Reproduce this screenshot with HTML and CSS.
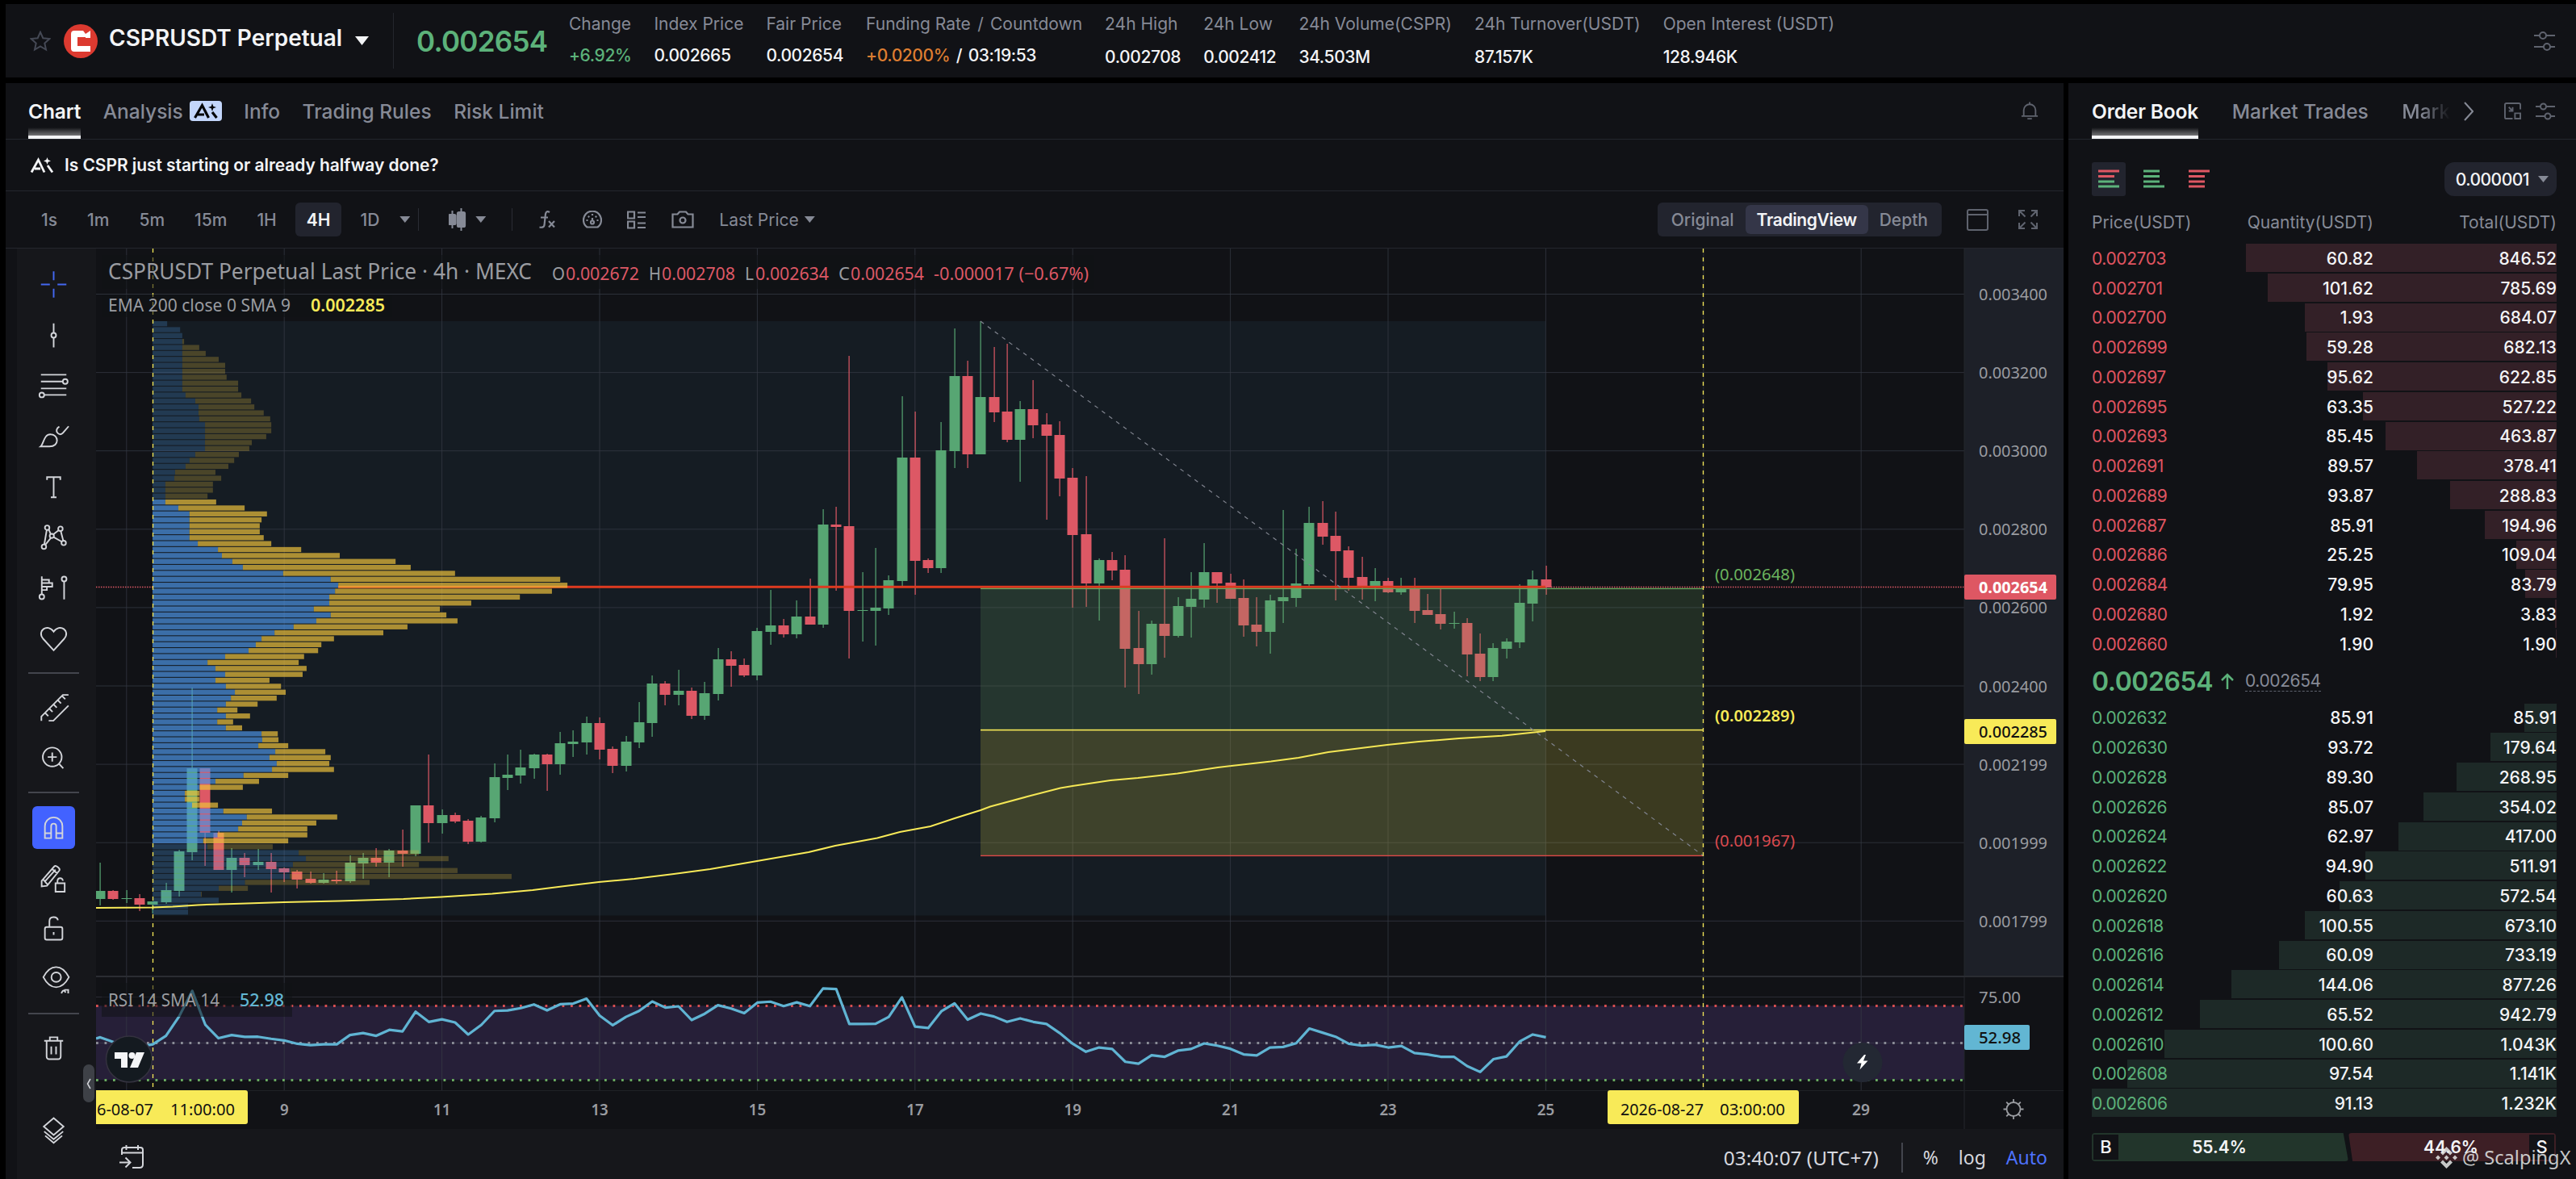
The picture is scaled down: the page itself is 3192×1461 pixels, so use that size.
FILE: index.html
```html
<!DOCTYPE html>
<html lang="en">
<head>
    <meta charset="UTF-8">
    <meta name="viewport" content="width=device-width, initial-scale=1.0">
    <title>CSPRUSDT Perpetual</title>
    <link rel="stylesheet" href="styles.css">
</head>
<body>
    <header class="ticker">
        <svg class="star" viewBox="0 0 26 26"><path d="M13 1.8l3.3 7.4 8 .9-6 5.4 1.7 8-7-4.1-7 4.1 1.7-8-6-5.4 8-.9z"/></svg>
        <svg class="coin" viewBox="0 0 42 42"><circle cx="21" cy="21" r="21" fill="#dc3a30"/><path d="M9 12q0-4 4-4h11l3 4 6-4v9h-6v-1H17v11h16v7H13q-4 0-4-4z" fill="#fff"/></svg>
        <h1 class="pair">CSPRUSDT Perpetual</h1>
        <i class="caret caret-lg"></i>
        <div class="last">0.002654</div>
        <dl class="stats">
            <div><dt>Change</dt><dd class="up">+6.92%</dd></div>
            <div><dt>Index Price</dt><dd>0.002665</dd></div>
            <div><dt>Fair Price</dt><dd>0.002654</dd></div>
            <div><dt>Funding Rate <span class="slash">/</span> Countdown</dt><dd><span class="orange">+0.0200%</span> <span class="slash">/</span> 03:19:53</dd></div>
            <div><dt>24h High</dt><dd>0.002708</dd></div>
            <div><dt>24h Low</dt><dd>0.002412</dd></div>
            <div><dt>24h Volume(CSPR)</dt><dd>34.503M</dd></div>
            <div><dt>24h Turnover(USDT)</dt><dd>87.157K</dd></div>
            <div><dt>Open Interest (USDT)</dt><dd>128.946K</dd></div>
        </dl>
        <svg class="line-icon sliders" viewBox="0 0 26 28"><path d="M0 7h7M15 7h11M0 21h12M20 21h6"/><circle cx="11" cy="7" r="4"/><circle cx="16" cy="21" r="4"/></svg>
    </header>

    <main>
        <section class="panel chart-panel">
            <nav class="tabs">
                <a class="on">Chart</a>
                <a>Analysis
                    <svg class="ai-badge" viewBox="0 0 40 25"><rect width="40" height="25" rx="4" fill="#c3d6fb"/><path d="M6.500 21L15.500 5.500 23.500 21M10 17h8M28 14l5.500 7" stroke="#050608" stroke-width="3.200" fill="none"/><path d="M28 3l1.300 3.700L33 8l-3.700 1.300L28 13l-1.300-3.700L23 8l3.700-1.300z" fill="#050608"/></svg>
                </a>
                <a>Info</a>
                <a>Trading Rules</a>
                <a>Risk Limit</a>
                <svg class="line-icon bell" viewBox="0 0 24 26"><path d="M1 20h22M4 20v-8a8 8 0 0 1 16 0v8M9 23.500h6M12 1v3"/></svg>
            </nav>

            <div class="ai-line">
                <svg viewBox="0 0 28 18"><path d="M1 17.500L9.500 2 17 17.500M5 13h7M21 9l6 8.500" stroke="#f3f4f6" stroke-width="2.800" fill="none"/><path d="M20.500-1l1.100 3L25 3.500l-3.400 1.300-1.100 3.200-1.200-3.200L16 3.500 19.300 2z" fill="#f3f4f6"/></svg>
                <span>Is CSPR just starting or already halfway done?</span>
            </div>

            <div class="toolbar">
                <span class="tf">1s</span>
                <span class="tf">1m</span>
                <span class="tf">5m</span>
                <span class="tf">15m</span>
                <span class="tf">1H</span>
                <span class="tf on">4H</span>
                <span class="tf">1D</span>
                <i class="caret tf-caret"></i>
                <i class="bar"></i>
                <svg class="i-candle" viewBox="0 0 22 28"><path d="M4.500 3v22M15.500 0v28" stroke="#868a96" stroke-width="2"/><rect y="8" width="8.500" height="12" rx="1.500" fill="#868a96"/><rect x="11" y="5" width="9" height="18" rx="1.500" fill="#868a96"/></svg>
                <i class="caret candle-caret"></i>
                <i class="bar bar2"></i>
                <svg class="i-fx" viewBox="0 0 22 22"><path d="M14 2q-4-2.500-5 2L7.500 18q-.5 3.500-6 2.500M3 8.500h9M13 13l7 7.500M20 13l-7 7.500"/></svg>
                <svg class="i-gauge" viewBox="0 0 24 22"><path d="M5.500 20.500a11 11 0 1 1 13 0zM12 4v2M4.500 12h2M17.500 12h2M6.800 6.800l1.400 1.400M17.200 6.800l-1.400 1.400M12 9v4"/><circle cx="12" cy="14.500" r="2"/></svg>
                <svg class="i-list" viewBox="0 0 23 23"><path d="M1 1.500h8v8H1zM1 13.500h8v8H1zM13 2.500h10M13 8h10M13 15.500h10M13 21h10"/></svg>
                <svg class="i-camera" viewBox="0 0 28 22"><path d="M1.500 4.500h6l2.500-3h8l2.500 3h6v16h-25z"/><circle cx="14" cy="12" r="3.500"/></svg>
                <span class="last-price">Last Price</span>
                <i class="caret"></i>

                <div class="segment">
                    <span>Original</span>
                    <span class="on">TradingView</span>
                    <span>Depth</span>
                </div>
                <svg class="line-icon i-layout" viewBox="0 0 27 27"><rect x="1" y="1" width="25" height="25" rx="2"/><path d="M1 7h25"/></svg>
                <svg class="line-icon i-full" viewBox="0 0 26 26"><path d="M2 9V2h7M2 2l7.500 7.500M17 2h7v7M24 2l-7.500 7.500M2 17v7h7M2 24l7.500-7.500M24 17v7h-7M24 24l-7.500-7.500"/></svg>
            </div>

            <div class="tv">
                <aside class="tools">
                    <div class="tool cross"><svg viewBox="0 0 28 28"><path d="M14 4.700v6.300M14 17v6.300M5 14h6.300M16.700 14H23"/></svg></div>
                    <div class="tool"><svg viewBox="0 0 28 28"><path d="M14 5.500v6.700M14 15.800v6.700"/><circle cx="14" cy="14" r="1.700"/></svg></div>
                    <div class="tool"><svg viewBox="0 0 28 28"><path d="M5 6.500h18M5 11.300h15.500M5 16.200h18M7.300 20.800H23"/><circle cx="22.200" cy="11.300" r="1.700"/><circle cx="5.600" cy="20.800" r="1.700"/></svg></div>
                    <div class="tool"><svg viewBox="0 0 28 28"><path d="M4.800 21.300c2.200-1.700 2.200-9 7.200-8.600 5.500 0 6.500 8.600-1 8.600zM18 7.200c-4.500 2.500 0 7.600 2.600 4.500l4-4.700"/></svg></div>
                    <div class="tool"><svg viewBox="0 0 28 28"><path d="M9.300 9V7h9.400v2M14 7v14.300M12 21.300h4"/></svg></div>
                    <div class="tool"><svg viewBox="0 0 28 28"><path d="M9.100 9l-1.700 10M10.500 8.700l1.300 3M13.900 12l3.700-2.800M12 14.700l-3.800 4.600M14 14.100l5.700 3.200M19 9.700l1.800 6.900"/><circle cx="9.400" cy="7.400" r="1.600"/><circle cx="18.800" cy="8.100" r="1.600"/><circle cx="12.700" cy="13.200" r="1.500"/><circle cx="7.100" cy="20.800" r="1.600"/><circle cx="21.100" cy="18.200" r="1.600"/></svg></div>
                    <div class="tool"><svg viewBox="0 0 28 28"><path d="M5.600 5.800v12.600M5.600 8.300h5.100v2.300H5.600M5.600 10.600H13v2.500H5.600M5.600 13.100h3.600v2.400H5.600M21.400 9.300v12.900"/><circle cx="5.600" cy="20.300" r="1.700"/><circle cx="21.400" cy="7.700" r="1.700"/></svg></div>
                    <div class="tool"><svg viewBox="0 0 28 28"><path d="M14 22.200l-7.500-8.200c-4.700-5.600 3.200-11.200 7.500-5 4.300-6.200 12.200-.6 7.500 5z"/></svg></div>
                    <hr>
                    <div class="tool"><svg viewBox="0 0 28 28"><path d="M5.300 23.500v-3L20.500 5.200h4M10.500 23.500h3.300L24.500 12.800M8 18l2.200 2.200M11 15l2.200 2.200M14 12l2.200 2.200M17 9l2.200 2.200M20 6l2.200 2.200"/></svg></div>
                    <div class="tool"><svg viewBox="0 0 28 28"><circle cx="13" cy="13.200" r="6.700"/><path d="M13 10v6.400M9.800 13.200h6.400M17.800 18l3 3.200"/></svg></div>
                    <hr>
                    <div class="tool magnet"><svg viewBox="0 0 28 28"><path d="M7.800 21.500V13a6.200 6.200 0 0 1 12.400 0v8.500h-4.400V13a1.800 1.800 0 0 0-3.600 0v8.500zM7.800 18h4.400M15.800 18h4.400"/></svg></div>
                    <div class="tool"><svg viewBox="0 0 28 28"><path d="M5.500 20.300v-4L14.500 6c1-1 4.500 1.500 3.500 3L9.300 19.800zM12.800 7.800l3.700 3.200M6.500 15.200l3.400 4M8 16.500l7.300-8.200M15.300 18h6.500v6h-6.500zM16.700 18v-1.400c0-2.800 3.800-2.800 3.800-.3"/></svg></div>
                    <div class="tool"><svg viewBox="0 0 28 28"><rect x="7.800" y="13" width="12.400" height="9" rx="1.300"/><path d="M11 13V8.800c0-3.600 5.500-3.600 6-.6M14 16.500v2"/></svg></div>
                    <div class="tool"><svg viewBox="0 0 28 28"><path d="M6.700 12.500c5-9.500 13-9.500 18.100 0-5 9.500-13.100 9.500-18.100 0z"/><circle cx="15.800" cy="12.500" r="3.400"/><path d="M19.500 24c.8-2.700 2.500-2.500 2.800-.5M21.500 21.500h2.800v2.500"/></svg></div>
                    <hr>
                    <div class="tool"><svg viewBox="0 0 28 28"><path d="M7.300 9h13.400M9 9v11c0 1.500.7 2 2 2h6c1.300 0 2-.5 2-2V9M11.300 9V6.500h5.400V9M12.300 13v5.500M15.700 13v5.500"/></svg></div>
                    <div class="tool layers"><svg viewBox="0 0 28 28"><path d="M14 6l7 6-7 6-7-6zM7.300 15.500L14 21l6.700-5.500M8 18.500l6 5 6-5"/></svg></div>
                </aside>

                <div class="tv-main">
                    <svg id="chart" class="chart" viewBox="119 308 2438 1091"></svg>
                    <div class="tv-foot">
                        <svg class="goto" viewBox="0 0 32 30"><path d="M4 12V6q0-3 3-3h20q3 0 3 3v18q0 4-4 4h-9M4 9.500h26M9.500 0v6M24 0v6M1 21.500h12M8.500 15.500l6 6-6 6"/></svg>
                        <span class="clock">03:40:07 (UTC+7)</span>
                        <i class="foot-bar"></i>
                        <span>%</span>
                        <span>log</span>
                        <span class="auto">Auto</span>
                    </div>
                </div>
                <div class="handle"><svg viewBox="0 0 6 14"><path d="M5 1L1.500 7 5 13"/></svg></div>
            </div>
        </section>

        <section class="panel book">
            <nav class="tabs">
                <a class="on">Order Book</a>
                <a>Market Trades</a>
                <a class="fade">Mark</a>
                <svg class="line-icon chev" viewBox="0 0 12 24"><path d="M1 1l10 11L1 23"/></svg>
                <svg class="line-icon pip" viewBox="0 0 22 22"><path d="M21 9V3q0-2-2-2H3Q1 1 1 3v16q0 2 2 2h8M6 6l5 5M11 6v5H6M14 14h7v7h-7z"/></svg>
                <svg class="line-icon tune" viewBox="0 0 24 24"><path d="M0 6h6M13 6h11M0 18h11M19 18h5"/><circle cx="9.500" cy="6" r="3.500"/><circle cx="15" cy="18" r="3.500"/></svg>
            </nav>

            <div class="book-bar">
                <svg class="view on" viewBox="0 0 42 42"><path d="M8 11h26M8 17.500h20" stroke="#de5763" stroke-width="3"/><path d="M8 24h20M8 30h26" stroke="#5cb27a" stroke-width="3"/></svg>
                <svg class="view" viewBox="0 0 42 42"><path d="M8 11h20M8 17.500h20M8 24h20M8 30h26" stroke="#5cb27a" stroke-width="3"/></svg>
                <svg class="view" viewBox="0 0 42 42"><path d="M8 11h26M8 17.500h20M8 24h20M8 30h20" stroke="#de5763" stroke-width="3"/></svg>
                <div class="step">0.000001<i class="caret"></i></div>
            </div>

            <div class="row head"><span>Price(USDT)</span><span>Quantity(USDT)</span><span>Total(USDT)</span></div>
            <div id="asks" class="asks"></div>
            <div class="mid">
                <strong>0.002654</strong>
                <svg viewBox="0 0 16 20"><path d="M8 20V2M1 9l7-7 7 7"/></svg>
                <span>0.002654</span>
            </div>
            <div id="bids" class="bids"></div>

            <div class="ratio">
                <div class="buy"><b>B</b><span>55.4%</span></div>
                <div class="sell"><span>44.6%</span><b>S</b></div>
            </div>
        </section>
    </main>

    <div class="mark">
        <svg viewBox="0 0 27 27"><path d="M13.500 0l7.500 7.500-3 3-4.500-4.500L9 10.500l-3-3zM3 10.500l3 3-3 3-3-3zM24 10.500l3 3-3 3-3-3zM13.500 10.500l3 3-3 3-3-3zM6 19.500l3-3 4.500 4.500 4.500-4.500 3 3-7.500 7.500z"/></svg>
        <span>@ ScalpingX</span>
    </div>

    <script src="chart.js"></script>
</body>
</html>
```
FILE: styles.css
```css
* {
    box-sizing: border-box;
}

body {
    margin: 0;
    width: 3192px;
    height: 1461px;
    overflow: hidden;
    background: #000;
    color: #f3f4f6;
    font-family: Inter, "Liberation Sans", sans-serif;
    font-size: 21px;
}

svg {
    display: block;
    flex: none;
}

.panel,
.ticker {
    background: #111216;
}

.line-icon {
    fill: none;
    stroke: #5f636e;
    stroke-width: 2;
}

.caret {
    flex: none;
    width: 13px;
    height: 8px;
    background: #868a96;
    clip-path: polygon(0 0, 100% 0, 50% 100%);
}

/* header */
.ticker {
    display: flex;
    align-items: center;
    height: 91px;
    margin: 5px 0 7px 7px;
    padding-left: 30px;
}

.star {
    width: 26px;
    height: 26px;
    fill: none;
    stroke: #454955;
    stroke-width: 2;
}

.coin {
    width: 42px;
    height: 42px;
    margin-left: 16px;
}

.pair {
    margin: -7px 0 0 14px;
    width: 290px;
    font-size: 28px;
    font-weight: 600;
    white-space: nowrap;
}

.caret-lg {
    width: 17px;
    height: 11px;
    margin-left: 15px;
    background: #f3f4f6;
}

.last {
    display: flex;
    align-items: center;
    width: 218px;
    height: 69px;
    margin-left: 30px;
    padding-left: 28px;
    border-left: 1px solid #24262d;
    color: #5cb27a;
    font-size: 35px;
    font-weight: 600;
    letter-spacing: -.7px;
}

.stats {
    display: flex;
    gap: 28px;
    margin: 0;
    white-space: nowrap;
}

.stats dt {
    color: #868a96;
    line-height: 26px;
    margin-bottom: 13px;
}

.stats dd {
    margin: 0;
    line-height: 26px;
    font-weight: 500;
    letter-spacing: -.4px;
}

.stats div:nth-child(n+5) dt {
    margin-bottom: 15px;
}

.stats .up {
    color: #5cb27a;
}

.slash {
    margin: 0 2.4px;
}

.orange {
    color: #dd7d31;
}

.sliders {
    width: 26px;
    height: 28px;
    margin: 0 26px 0 auto;
}

/* panels */
main {
    display: flex;
    gap: 6px;
    height: 1358px;
    margin-left: 7px;
}

.chart-panel {
    display: flex;
    flex-direction: column;
    width: 2550px;
}

.book {
    flex: 1;
    padding-left: 29px;
}

.tabs {
    display: flex;
    align-items: center;
    gap: 27.5px;
    height: 70px;
    padding-left: 28px;
    border-bottom: 1px solid #24262d;
    color: #868a96;
    font-size: 24.5px;
    font-weight: 500;
    white-space: nowrap;
}

.tabs a {
    display: flex;
    align-items: center;
    gap: 8px;
    height: 69px;
}

.tabs .on {
    color: #f3f4f6;
    font-weight: 600;
    letter-spacing: -.15px;
    background: linear-gradient(#f3f4f6, #f3f4f6) 0 100% / 100% 4px no-repeat,
        linear-gradient(transparent 55px, rgba(255, 255, 255, .45) 66px) no-repeat;
}

.ai-badge {
    width: 40px;
    height: 25px;
}

.bell {
    width: 22px;
    height: 25px;
    margin: 0 31px 0 auto;
}

.ai-line {
    display: flex;
    align-items: center;
    gap: 14px;
    height: 64px;
    padding-left: 31px;
    border-bottom: 1px solid #24262d;
    font-weight: 600;
    letter-spacing: -.07px;
}

.ai-line svg {
    width: 28px;
    height: 18px;
    overflow: visible;
}

/* chart toolbar */
.toolbar {
    display: flex;
    align-items: center;
    height: 71px;
    padding-left: 30px;
    border-bottom: 1px solid #24262d;
    color: #868a96;
    font-weight: 500;
}

.toolbar > svg:not(.line-icon) {
    fill: none;
    stroke: #868a96;
    stroke-width: 2.2;
}

.tf {
    display: flex;
    align-items: center;
    height: 42px;
    padding: 0 14px;
    margin-right: 9px;
    border-radius: 6px;
}

.tf.on {
    background: #22242e;
    color: #f3f4f6;
    font-weight: 600;
}

.tf-caret {
    margin: 0 10px 0 2px;
}

.bar {
    width: 1px;
    height: 28px;
    background: #2a2c34;
}

.i-candle {
    width: 22px;
    height: 28px;
    margin-left: 37px;
}

.candle-caret {
    margin-left: 11px;
}

.bar2 {
    margin-left: 32px;
}

.i-fx {
    width: 22px;
    height: 22px;
    margin-left: 32px;
}

.i-gauge {
    width: 24px;
    height: 22px;
    margin-left: 33px;
}

.i-list {
    width: 23px;
    height: 23px;
    margin-left: 31px;
}

.i-camera {
    width: 28px;
    height: 22px;
    margin-left: 32px;
}

.last-price {
    margin: 0 7px 0 31px;
    font-weight: 400;
}

.segment {
    display: flex;
    align-items: center;
    height: 42px;
    margin-left: auto;
    padding: 0 3px;
    border-radius: 6px;
    background: #22242e;
}

.segment span {
    display: flex;
    align-items: center;
    height: 36px;
    padding: 0 14px;
    border-radius: 6px;
}

.segment .on {
    background: #343648;
    color: #f3f4f6;
    font-weight: 600;
    letter-spacing: -.35px;
}

.i-layout {
    width: 27px;
    height: 27px;
    margin-left: 31px;
}

.i-full {
    width: 26px;
    height: 26px;
    margin: 0 31px 0 36px;
}

/* tradingview */
.tv {
    display: flex;
    position: relative;
    height: 1153px;
    padding-left: 14px;
}

.tools {
    width: 98px;
    padding-top: 13px;
    background: #16171b;
}

.tool {
    display: flex;
    align-items: center;
    justify-content: center;
    height: 62.7px;
    padding-right: 7px;
}

.tool svg {
    width: 49px;
    height: 49px;
    fill: none;
    stroke: #d3d5da;
    stroke-width: 1.1;
}

.cross svg {
    stroke: #4468f2;
}

.tools hr {
    width: 63px;
    height: 2px;
    margin: 10.5px 0 10.5px 14px;
    border: 0;
    background: #43454d;
}

.magnet svg {
    width: 53px;
    height: 53px;
    padding: 2px;
    border-radius: 6px;
    background: #4262ff;
}

.layers {
    margin-top: 38px;
}

.handle {
    position: absolute;
    left: 96px;
    top: 1011px;
    display: flex;
    align-items: center;
    justify-content: center;
    width: 14px;
    height: 47px;
    border-radius: 7px;
    background: #3e4147;
}

.handle svg {
    width: 6px;
    height: 14px;
    fill: none;
    stroke: #d3d5da;
    stroke-width: 1.5;
}

.tv-main {
    width: 2438px;
}

.chart {
    width: 2438px;
    height: 1091px;
}

.chart text {
    font-family: "Trebuchet MS", "Noto Sans", sans-serif;
}

.tv-foot {
    display: flex;
    align-items: center;
    height: 62px;
    padding: 8px 20px 0 28px;
    background: #16171b;
    color: #d6d8df;
    font-family: "Trebuchet MS", "Noto Sans", sans-serif;
    font-size: 23px;
    gap: 25px;
}

.goto {
    width: 32px;
    height: 30px;
    fill: none;
    stroke: #d3d5da;
    stroke-width: 2;
}

.clock {
    margin-left: auto;
    margin-right: 3px;
    font-size: 24.4px;
}

.foot-bar {
    width: 2px;
    height: 37px;
    background: #43454d;
}

.tv-foot .auto {
    color: #4d72ff;
}

/* order book */
.book .tabs {
    margin-left: -29px;
    padding-left: 29px;
    gap: 41.5px;
}

.fade {
    background: linear-gradient(90deg, #868a96 40%, transparent);
    background-clip: text;
    -webkit-background-clip: text;
    color: transparent;
}

.chev {
    width: 12px;
    height: 24px;
    margin-left: -25px;
    stroke: #868a96;
}

.pip {
    width: 21px;
    height: 21px;
    margin-left: -3px;
}

.tune {
    width: 24px;
    height: 24px;
    margin-left: -24px;
}

.book-bar {
    display: flex;
    align-items: center;
    gap: 14px;
    width: 576px;
    margin-top: 28px;
}

.view {
    width: 42px;
    height: 42px;
    border-radius: 3px;
}

.view.on {
    background: #22242e;
}

.step {
    display: flex;
    align-items: center;
    gap: 11px;
    height: 42px;
    margin-left: auto;
    padding: 0 10px 0 14px;
    border-radius: 12px;
    background: #22242e;
    font-weight: 500;
    letter-spacing: -.5px;
}

.row {
    display: grid;
    grid-template-columns: 150px 199px 227px;
    align-items: center;
    position: relative;
    width: 576px;
    height: 36.75px;
    font-weight: 500;
}

.row span {
    position: relative;
    text-align: right;
}

.row span:first-of-type {
    text-align: left;
    font-weight: 400;
}

.row i {
    position: absolute;
    right: 0;
    top: 0;
    height: 35px;
}

.row.head {
    height: 59px;
    padding-top: 5px;
    color: #868a96;
    font-weight: 400;
}

.asks i {
    background: #332027;
}

.asks span:first-of-type {
    color: #e05561;
    letter-spacing: -.4px;
}

.bids i {
    background: #1d2927;
}

.bids span:first-of-type {
    color: #5cb27a;
    letter-spacing: -.4px;
}

.mid {
    display: flex;
    align-items: center;
    height: 55px;
    color: #5cb27a;
}

.mid strong {
    font-size: 32px;
    font-weight: 600;
    letter-spacing: -.45px;
}

.mid svg {
    width: 16px;
    height: 20px;
    margin: 0 14px 0 10px;
    fill: none;
    stroke: #5cb27a;
    stroke-width: 2.5;
}

.mid span {
    border-bottom: 1px dashed #5f636e;
    color: #868a96;
    letter-spacing: -.4px;
}

.ratio {
    display: flex;
    width: 576px;
    height: 35px;
    margin-top: 18px;
    font-weight: 600;
}

.ratio div {
    display: flex;
    align-items: center;
    border-radius: 4px;
}

.ratio span {
    flex: 1;
    text-align: center;
}

.ratio b {
    width: 31px;
    height: 31px;
    background: #111216;
    font-weight: 500;
    font-size: 22px;
    line-height: 31px;
    text-align: center;
}

.buy {
    width: 318px;
    padding: 0 35px 0 2px;
    background: #22352b;
    clip-path: polygon(0 0, 98% 0, 100% 100%, 0 100%);
}

.sell {
    width: 257px;
    padding-right: 2px;
    background: #3d1f25;
    clip-path: polygon(0 0, 100% 0, 100% 100%, 2% 100%);
}

.sell span {
    padding-left: 30px;
}

.mark {
    position: absolute;
    left: 3018px;
    top: 1418px;
    display: flex;
    align-items: center;
    gap: 6px;
    color: rgba(230, 233, 232, .85);
    font-family: "Noto Sans", sans-serif;
    font-size: 23.6px;
    white-space: nowrap;
}

.mark svg {
    width: 27px;
    height: 27px;
    fill: rgba(230, 233, 232, .85);
}
```
FILE: chart.js
```js
const chart = document.getElementById('chart');

const LEFT = 119, AXIS = 2434, RIGHT = 2557;
const UP = '#57a673', DOWN = '#dd5865';
const YELLOW = '#f8ea58';

const barX = (i) => 124.2 + 16.285 * i;
const rsiY = (v) => 1292.3 + (50 - v) * 2.3;

// high, body top, body bottom, low (canvas y), 1 = up candle
const candles = [
    [1069,1104,1114,1122,1], [1103,1104,1114,1115,0], [1103,1113,1114,1119,1], [1108,1113,1121,1129,0],
    [1117,1117,1121,1132,1], [1094,1103,1118,1120,1], [1053,1055,1104,1111,1], [852,952,1056,1066,1],
    [952,952,1032,1073,0], [1029,1032,1078,1078,0], [1051,1063,1078,1106,1], [1057,1063,1072,1087,0],
    [1052,1068,1072,1078,1], [1057,1068,1077,1106,0], [1075,1076,1081,1093,0], [1078,1080,1090,1101,0],
    [1080,1089,1094,1095,0], [1082,1090,1094,1095,1], [1079,1090,1092,1095,0], [1060,1069,1092,1094,1],
    [1057,1063,1070,1089,1], [1051,1063,1069,1074,0], [1052,1054,1069,1087,1], [1028,1054,1058,1074,0],
    [998,998,1058,1061,1], [935,998,1020,1044,0], [1003,1010,1020,1033,1], [1007,1010,1018,1020,0],
    [1015,1017,1043,1046,0], [1011,1013,1043,1044,1], [946,963,1014,1019,1], [935,960,964,979,1],
    [929,951,961,971,1], [934,935,952,965,1], [934,935,947,980,0], [907,921,947,960,1],
    [905,919,922,938,1], [888,896,920,935,1], [889,896,929,941,0], [925,928,949,958,0],
    [912,919,949,956,1], [870,895,920,927,1], [837,847,896,913,1], [844,847,861,874,0],
    [830,856,861,874,1], [852,856,887,891,0], [845,859,887,892,1], [803,817,860,868,1],
    [807,817,825,851,0], [816,824,837,839,0], [778,782,837,843,1], [731,775,783,799,1],
    [767,775,786,790,0], [744,764,786,791,1], [717,764,774,774,0], [631,650,774,778,1],
    [628,650,653,732,0], [441,652,757,816,0], [709,756,757,795,1], [679,753,757,800,1],
    [713,719,754,762,1], [491,567,720,726,1], [510,567,695,737,0], [692,694,704,710,0],
    [523,558,704,710,1], [407,466,559,580,1], [447,466,563,580,0], [398,492,563,563,1],
    [430,492,511,523,0], [426,510,545,548,0], [497,507,545,597,1], [471,507,527,543,0],
    [512,526,540,644,0], [522,539,593,615,0], [580,592,663,753,0], [590,662,723,752,0],
    [692,694,723,769,1], [684,694,707,719,0], [688,706,804,852,0], [757,803,823,860,0],
    [769,773,823,836,1], [667,773,788,815,0], [740,751,788,790,1], [709,742,752,790,1],
    [673,709,743,753,1], [709,709,723,747,0], [711,722,742,742,0], [718,741,775,789,0],
    [740,774,783,801,0], [737,744,783,810,1], [632,740,745,772,1], [680,723,741,752,1],
    [628,648,724,726,1], [621,648,665,675,0], [634,664,683,744,0], [677,682,716,732,0],
    [690,715,726,743,0], [704,720,726,745,1], [716,720,734,735,0], [716,729,734,737,1],
    [716,729,757,772,0], [736,756,762,762,0], [729,761,773,780,0], [758,772,773,779,1],
    [766,772,811,838,0], [785,810,839,844,0], [797,803,839,844,1], [791,795,804,816,1],
    [724,747,796,803,1], [707,718,748,770,1], [701,718,728,737,0]
];

const rsi = [
    53,50.5,48,48,49.2,53.8,64.2,78,59.7,52.5,54.2,53.2,53.3,52.2,51.3,49.5,48.8,49.2,49.2,54.2,
    55.3,53.8,57,56.2,66.8,61.3,62.7,61,54.5,59.7,67.2,67.5,68.7,70.7,67.5,70.8,71.2,73.8,64.7,59.5,
    64,67.2,72.3,69,69.7,62.3,65.7,70.3,68.5,66,71.7,72.2,69.8,71.8,69.8,79.3,79,60.2,60.2,60.3,
    64,74.5,58.8,58,67,71.3,62.5,65.8,64.2,61.3,63.2,61.3,60.2,55.3,49.5,45.2,47.5,46.7,39.8,38.8,
    43.3,42.5,45.8,46.7,49.7,48.5,46.8,43.8,43.2,47.5,47.8,49.8,57.7,55.5,53.3,49.5,48.5,49,47.5,48.3,
    44.5,43.8,42.5,42.5,37.5,34.3,41.2,42.7,50.7,54.5,53
];

// volume profile rows, top to bottom: end of blue part, end of gold part
const profile = [
    [464,464],[500,500],[506,506],[506,511],[506,553],[506,571],[506,607],[506,625],[506,625],[506,629],
    [506,661],[506,661],[515,670],[542,697],[551,706],[551,732],[553,750],[569,753],[569,753],[569,739],
    [569,699],[569,692],[542,663],[526,650],[515,634],[486,598],[484,614],[459,591],[459,591],[459,576],
    [459,600],[495,679],[526,741],[526,726],[526,721],[526,721],[526,732],[549,753],[605,836],[616,943],
    [645,1098],[674,1140],[786,1263],[918,1555],[939,1575],[930,1532],[914,1443],[914,1308],[871,1221],[918,1239],
    [878,1270],[815,1131],[762,1064],[726,927],[710,892],[690,883],[625,844],[576,829],[598,851],[625,840],
    [598,748],[627,780],[652,793],[641,768],[627,715],[603,659],[627,694],[603,647],[627,672],[726,771],
    [728,773],[717,800],[764,903],[748,918],[768,914],[755,927],[676,800],[598,719],[554,674],[513,554],
    [513,554],[533,605],[620,755],[685,936],[672,878],[661,853],[604,853],[564,800],[576,757],[829,1163],
    [849,1245],[813,1163],[806,1270],[804,1420],[680,1026],[607,688],[558,560],[607,607],[522,522],[522,522]
];

const ema = '119,1125 189,1124.500 214,1123.500 245,1121.400 290,1120 352,1118 420,1116.500 500,1114 547,1111.400 610,1107.600 660,1103 700,1098 742,1093 786,1089 835,1083 880,1077 938,1067 1002,1056 1035,1048 1087,1038.500 1115,1031 1153,1024 1183,1014 1215,1004 1227,999.500 1277,986 1314,976.500 1329,974 1376,967 1410,964 1459,958.500 1509,951 1575,943.600 1609,939 1646,932 1719,923 1758,919 1808,915 1861,911.700 1915,906';

let out = '';

const rect = (x, y, w, h, fill, extra = '') => {
    out += `<rect x="${x}" y="${y}" width="${w}" height="${h}" fill="${fill}" ${extra}/>`;
};
const line = (x1, y1, x2, y2, stroke, w = 1, extra = '') => {
    out += `<line x1="${x1}" y1="${y1}" x2="${x2}" y2="${y2}" stroke="${stroke}" stroke-width="${w}" ${extra}/>`;
};
const text = (s, x, y, len, size, fill, weight = 400) => {
    out += `<text x="${x}" y="${y}" font-size="${size}" fill="${fill}" font-weight="${weight}" textLength="${len}" lengthAdjust="spacingAndGlyphs">${s}</text>`;
};

rect(LEFT, 308, 2438, 1091, '#111216');
rect(189, 398, 1726, 736.5, '#151c23');

// rsi band
rect(LEFT, 1246.3, AXIS - LEFT, 92, '#261f38');

// grid
for (let i = 0; i < 9; i++) line(LEFT, 364.5 + i * 97.1, AXIS, 364.5 + i * 97.1, '#363a45', 1, 'opacity=".75"');
line(LEFT, 1235.5, AXIS, 1235.5, '#2a2c34');
line(LEFT, 1292.5, AXIS, 1292.5, '#343146');
for (let i = 0; i < 12; i++) line(156.8 + i * 195.4, 308, 156.8 + i * 195.4, 1351, '#363a45', 1, 'opacity=".75"');

// candles
candles.forEach(([h, t, b, l, up], i) => {
    const x = Math.round(barX(i));
    rect(x - .5, h, 1.2, l - h, up ? UP : DOWN);
    rect(x - 6.5, t, 13, Math.max(b - t, 1), up ? UP : DOWN);
});

// point of control
rect(419, 725.8, 1496, 3, '#dd3a20');

// profile
profile.forEach(([blue, gold], i) => {
    const y = 398 + i * 7.365;
    const alpha = i < 30 || i > 87 ? .25 : .7;
    const x0 = 189, x1 = blue / 2.24, x2 = gold / 2.24;
    rect(x0, y, x1 - x0, 6.3, 'rgb(75,146,225)', `opacity="${alpha}"`);
    if (x2 > x1) rect(x1, y, x2 - x1, 6.3, 'rgb(236,193,60)', `opacity="${alpha}"`);
});

out += `<polyline points="${ema}" fill="none" stroke="${YELLOW}" stroke-width="2"/>`;

// position box
rect(1215, 729, 895, 175.5, 'rgba(106,158,95,.2)');
rect(1215, 904.5, 895, 156, 'rgba(231,218,75,.2)');
rect(1215, 728.8, 895, 1.3, '#6aaa5f');
rect(1215, 903.8, 895, 1.6, YELLOW);
rect(1215, 1059.7, 895, 1.4, '#dc4848');
line(1215, 398, 2110, 1060, '#80848f', 1.2, 'stroke-dasharray="5 6"');

// last price dots
line(LEFT, 727.5, 189, 727.5, DOWN, 1.3, 'stroke-dasharray="1.500 1.500"');
line(1922, 727.5, AXIS, 727.5, DOWN, 1.3, 'stroke-dasharray="1.500 1.500"');

// rsi
line(LEFT, 1246.4, AXIS, 1246.4, '#d84f50', 3, 'stroke-dasharray="2.800 7.700"');
line(LEFT, 1292.4, AXIS, 1292.4, '#8a8b96', 3, 'stroke-dasharray="2.800 7.700"');
line(LEFT, 1338.4, AXIS, 1338.4, '#69ab60', 3, 'stroke-dasharray="2.800 7.700"');
const pts = rsi.map((v, i) => `${barX(i)},${rsiY(v)}`).join(' ');
out += `<polyline points="${LEFT},1287 ${pts}" fill="none" stroke="#60b4d3" stroke-width="3.200" stroke-linejoin="round"/>`;

line(189.5, 308, 189.5, 1351, YELLOW, 1.3, 'stroke-dasharray="5 6"');
line(2110.5, 308, 2110.5, 1351, YELLOW, 1.3, 'stroke-dasharray="5 6"');

// legends
rect(126, 316, 1230, 42, '#111216', 'opacity=".55"');
rect(126, 365, 360, 28, '#111216', 'opacity=".55"');
rect(126, 1218, 236, 42, '#111216', 'opacity=".55"');
const GREY = '#9a9ca1';
text('CSPRUSDT Perpetual Last Price · 4h · MEXC', 134, 346, 525, 27, GREY);
text('O', 684, 346.5, 16, 22, GREY);
text('0.002672', 701, 346.5, 91, 21.5, '#dd5865');
text('H', 804, 346.5, 15, 22, GREY);
text('0.002708', 820, 346.5, 91, 21.5, '#dd5865');
text('L', 923, 346.5, 11, 22, GREY);
text('0.002634', 936, 346.5, 91, 21.5, '#dd5865');
text('C', 1039, 346.5, 14, 22, GREY);
text('0.002654', 1054, 346.5, 91, 21.5, '#dd5865');
text('-0.000017 (−0.67%)', 1157, 346.5, 192, 21.5, '#dd5865');
text('EMA 200 close 0 SMA 9', 134, 386, 226, 22, GREY);
text('0.002285', 385, 386, 92, 21.5, YELLOW, 600);
text('RSI 14 SMA 14', 134, 1247, 138, 22, GREY);
text('52.98', 297, 1247, 55, 21.5, '#62b6d3', 500);

text('(0.002648)', 2125, 719, 99, 20, '#6bb35e');
text('(0.002289)', 2125, 894, 99, 20, YELLOW, 600);
text('(0.001967)', 2125, 1049, 99, 20, '#d94a4f');

// axes
rect(AXIS, 308, RIGHT - AXIS, 902, '#1d2028');
rect(AXIS, 1210, RIGHT - AXIS, 189, '#111216');
line(AXIS, 308, AXIS, 1399, '#24262d');
line(LEFT, 1210, RIGHT, 1210, '#2a2c32', 2);
line(LEFT, 1351.5, RIGHT, 1351.5, '#1f2126');
['0.003400', '0.003200', '0.003000', '0.002800', '0.002600', '0.002400', '0.002199', '0.001999', '0.001799']
    .forEach((s, i) => text(s, 2452, 372 + i * 97.1, 85, 20, GREY));
text('75.00', 2452, 1243, 52, 20, GREY);

const tag = (s, x, y, w, len, fill, color, weight) => {
    rect(x, y, w, 31, fill, 'rx="2"');
    text(s, 2452, y + 23, len, 20, color, weight);
};
tag('0.002654', AXIS, 712, 114, 85, '#de5763', '#fff', 700);
tag('0.002285', AXIS, 891, 114, 85, YELLOW, '#111', 500);
tag('52.98', AXIS, 1270, 81, 52, '#62b6d3', '#111', 500);

for (let i = 0; i < 9; i++) {
    const s = String(9 + i * 2);
    const w = s.length * 10.7;
    text(s, 352.3 + i * 195.4 - w / 2, 1382, w, 20, GREY, 600);
}
text('29', 2295, 1382, 22, 20, GREY, 600);

rect(115, 1351, 192, 42, YELLOW, 'rx="3"');
text('6-08-07', 120, 1382, 70, 20, '#111');
text('11:00:00', 211, 1382, 80, 20, '#111');
rect(1992, 1351, 237, 42, YELLOW, 'rx="3"');
text('2026-08-27', 2008, 1382, 103, 20, '#111');
text('03:00:00', 2131, 1382, 81, 20, '#111');

// tradingview logo, flash, axis settings
out += `<circle cx="160" cy="1312.500" r="28.500" fill="#141a20" stroke="#34323f" stroke-width="1.500"/>
    <path d="M142 1304h16v19h-8v-11h-8zM169 1304h10l-8 19h-10z" fill="#f3f4f6"/><circle cx="163.500" cy="1308" r="4" fill="#f3f4f6"/>
    <circle cx="2308" cy="1316.500" r="24.500" fill="#232833"/>
    <path d="M2310 1307l-9 10.500h5.500l-2 8 10-11h-5.500l3-7.500z" fill="#fff"/>
    <g fill="none" stroke="${GREY}" stroke-width="1.800"><circle cx="2495" cy="1374.500" r="8.500"/>
    <path d="M2495 1362v4M2495 1383v4M2482.500 1374.500h4M2503.500 1374.500h4M2486.200 1365.700l2.800 2.800M2501 1380.500l2.800 2.800M2486.200 1383.300l2.800-2.800M2501 1368.500l2.800-2.800"/></g>`;

chart.innerHTML = out;

// order book: price, quantity, total, depth %
const asks = [
    ['0.002703', '60.82', '846.52', 66.9],
    ['0.002701', '101.62', '785.69', 62.1],
    ['0.002700', '1.93', '684.07', 54.2],
    ['0.002699', '59.28', '682.13', 53.9],
    ['0.002697', '95.62', '622.85', 49.3],
    ['0.002695', '63.35', '527.22', 41.7],
    ['0.002693', '85.45', '463.87', 36.8],
    ['0.002691', '89.57', '378.41', 30],
    ['0.002689', '93.87', '288.83', 22.9],
    ['0.002687', '85.91', '194.96', 15.5],
    ['0.002686', '25.25', '109.04', 8.7],
    ['0.002684', '79.95', '83.79', 6.7],
    ['0.002680', '1.92', '3.83', .3],
    ['0.002660', '1.90', '1.90', .2]
];
const bids = [
    ['0.002632', '85.91', '85.91', 6.9],
    ['0.002630', '93.72', '179.64', 14.2],
    ['0.002628', '89.30', '268.95', 21.6],
    ['0.002626', '85.07', '354.02', 28.6],
    ['0.002624', '62.97', '417.00', 34.1],
    ['0.002622', '94.90', '511.91', 41.2],
    ['0.002620', '60.63', '572.54', 46.7],
    ['0.002618', '100.55', '673.10', 54.2],
    ['0.002616', '60.09', '733.19', 59.8],
    ['0.002614', '144.06', '877.26', 70],
    ['0.002612', '65.52', '942.79', 76.8],
    ['0.002610', '100.60', '1.043K', 84.3],
    ['0.002608', '97.54', '1.141K', 92.4],
    ['0.002606', '91.13', '1.232K', 100]
];

const rows = (list) => list.map(([p, q, t, d]) =>
    `<div class="row"><i style="width: ${d}%"></i><span>${p}</span><span>${q}</span><span>${t}</span></div>`).join('');

document.getElementById('asks').innerHTML = rows(asks);
document.getElementById('bids').innerHTML = rows(bids);
```
